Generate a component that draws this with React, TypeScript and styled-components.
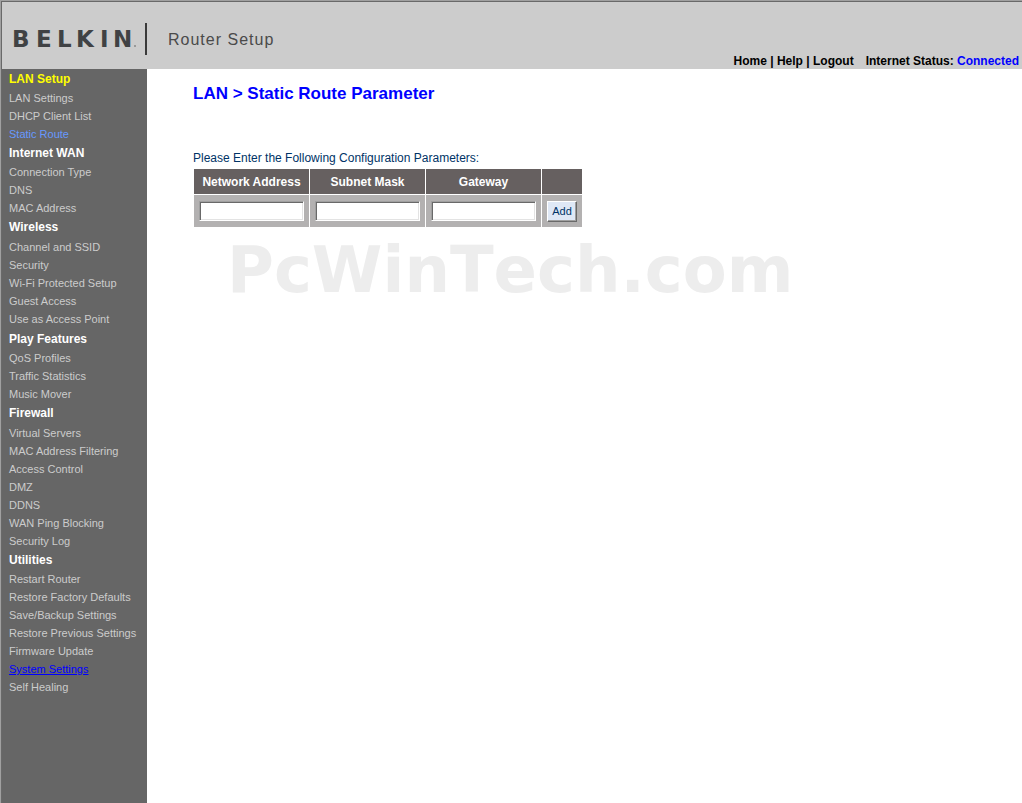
import React from "react";
import styled, { createGlobalStyle } from "styled-components";

const GlobalStyle = createGlobalStyle`
  * { box-sizing: border-box; }
  body {
    margin: 0;
    background: #fff;
    font-family: "Liberation Sans", Arial, sans-serif;
    font-size: 12px;
  }
`;

const Frame = styled.div`
  border-top: 1px solid #a0a0a0;
  border-left: 1px solid #a0a0a0;
`;

const Page = styled.div`
  display: flex;
  flex-direction: column;
  min-height: calc(100vh - 1px);
  border-top: 1px solid #696969;
  border-left: 1px solid #696969;
`;

const Header = styled.header`
  display: flex;
  justify-content: space-between;
  height: 67px;
  background: #ccc;
`;

const Brand = styled.div`
  display: flex;
  align-items: center;
  padding: 7px 0 0 10px;
`;

const Logo = styled.svg`
  display: block;
  width: 136px;
  height: 34px;
`;

const Product = styled.span`
  padding: 2px 0 0 20px;
  font-size: 16px;
  letter-spacing: 1px;
  color: #4a4a4a;
`;

const TopBar = styled.nav`
  align-self: flex-end;
  padding-right: 3px;
  font-weight: bold;
  line-height: 16px;
  white-space: pre;
  color: #000;
`;

const TopLink = styled.a`
  color: #000;
  text-decoration: none;
`;

const Status = styled.span`
  margin-left: 12px;
`;

const Connected = styled.span`
  color: #00f;
`;

const Body = styled.div`
  display: flex;
  flex: 1;
`;

const Sidebar = styled.nav`
  flex: 0 0 145px;
  padding-left: 7px;
  background: #666;
`;

const GroupTitle = styled.h2<{ $active?: boolean }>`
  margin: 0;
  font-size: 12px;
  line-height: 20px;
  color: ${(p) => (p.$active ? "#ff0" : "#fff")};
`;

const ItemList = styled.ul<{ $top?: number; $bottom?: number }>`
  margin: 0;
  padding: ${(p) => p.$top ?? 0}px 0 ${(p) => p.$bottom ?? 0}px;
  list-style: none;
  font-size: 11px;
  line-height: 18px;
  white-space: nowrap;
`;

type LinkState = "normal" | "current" | "hover";

const linkColors: Record<LinkState, string> = {
  normal: "#ccc",
  current: "#69f",
  hover: "#00f",
};

const ItemLink = styled.a<{ $state: LinkState }>`
  color: ${(p) => linkColors[p.$state]};
  text-decoration: ${(p) => (p.$state === "hover" ? "underline" : "none")};
`;

const Main = styled.main`
  flex: 1;
  padding: 15px 0 0 46px;
`;

const Title = styled.h1`
  margin: 0;
  font-size: 17px;
  line-height: 20px;
  color: #00f;
`;

const Intro = styled.p`
  margin: 44px 0 0;
  line-height: 20px;
  color: #036;
`;

const Table = styled.table`
  border-spacing: 1px;
`;

const HeadCell = styled.th`
  height: 25px;
  padding: 0;
  background: #666060;
  color: #fff;
  font-size: 12px;
`;

const Cell = styled.td`
  height: 32px;
  padding: 0 5px;
  background: #b3b1b1;
`;

const Field = styled.input`
  display: block;
  width: 105px;
  height: 20px;
  padding: 2px;
  border: 1px solid;
  border-color: #a0a0a0 #fff #fff #a0a0a0;
  border-radius: 0;
  box-shadow: inset 1px 1px 0 #696969, inset -1px -1px 0 #e3e3e3;
  background: #fff;
  font: inherit;
`;

const AddButton = styled.button`
  display: block;
  width: 30px;
  height: 21px;
  padding: 0;
  border: 1px solid;
  border-color: #fff #696969 #696969 #fff;
  border-radius: 0;
  box-shadow: inset -1px -1px 0 #a0a0a0;
  background: #dfe8f6;
  color: #036;
  font-family: inherit;
  font-size: 11px;
`;

const Watermark = styled.div`
  margin: 4px 0 0 34px;
  font-family: "DejaVu Sans", Verdana, sans-serif;
  font-size: 64px;
  font-weight: bold;
  font-kerning: none;
  line-height: 76px;
  color: #ededed;
`;

interface Group {
  title: string;
  items: string[];
  active?: boolean;
  top?: number;
  bottom?: number;
}

const groups: Group[] = [
  { title: "LAN Setup", active: true, items: ["LAN Settings", "DHCP Client List", "Static Route"] },
  { title: "Internet WAN", items: ["Connection Type", "DNS", "MAC Address"] },
  {
    title: "Wireless",
    top: 1,
    bottom: 1,
    items: ["Channel and SSID", "Security", "Wi-Fi Protected Setup", "Guest Access", "Use as Access Point"],
  },
  { title: "Play Features", items: ["QoS Profiles", "Traffic Statistics", "Music Mover"] },
  {
    title: "Firewall",
    top: 1,
    items: [
      "Virtual Servers",
      "MAC Address Filtering",
      "Access Control",
      "DMZ",
      "DDNS",
      "WAN Ping Blocking",
      "Security Log",
    ],
  },
  {
    title: "Utilities",
    items: [
      "Restart Router",
      "Restore Factory Defaults",
      "Save/Backup Settings",
      "Restore Previous Settings",
      "Firmware Update",
      "System Settings",
      "Self Healing",
    ],
  },
];

const columns = ["Network Address", "Subnet Mask", "Gateway"];

const stateOf = (item: string): LinkState =>
  item === "Static Route" ? "current" : item === "System Settings" ? "hover" : "normal";

export default function App() {
  return (
    <Frame>
      <GlobalStyle />
      <Page>
        <Header>
          <Brand>
            <Logo viewBox="0 0 136 34" role="img" aria-label="Belkin">
              <text
                x="0 24 45 64 88 101"
                y="25"
                fontFamily="'DejaVu Sans', sans-serif"
                fontSize="23"
                fontWeight="700"
                fill="#404244"
              >
                BELKIN
              </text>
              <rect x="122" y="23" width="2" height="2" fill="#999" />
              <rect x="133" y="1" width="2" height="32" fill="#3a3a3a" />
            </Logo>
            <Product>Router Setup</Product>
          </Brand>
          <TopBar>
            <TopLink href="#">Home</TopLink> | <TopLink href="#">Help</TopLink> |{" "}
            <TopLink href="#">Logout</TopLink>
            <Status>
              Internet Status: <Connected>Connected</Connected>
            </Status>
          </TopBar>
        </Header>
        <Body>
          <Sidebar>
            {groups.map((group) => (
              <section key={group.title}>
                <GroupTitle $active={group.active}>{group.title}</GroupTitle>
                <ItemList $top={group.top} $bottom={group.bottom}>
                  {group.items.map((item) => (
                    <li key={item}>
                      <ItemLink href="#" $state={stateOf(item)}>
                        {item}
                      </ItemLink>
                    </li>
                  ))}
                </ItemList>
              </section>
            ))}
          </Sidebar>
          <Main>
            <Title>LAN &gt; Static Route Parameter</Title>
            <Intro>Please Enter the Following Configuration Parameters:</Intro>
            <Table>
              <thead>
                <tr>
                  {columns.map((column) => (
                    <HeadCell key={column} scope="col">
                      {column}
                    </HeadCell>
                  ))}
                  <HeadCell />
                </tr>
              </thead>
              <tbody>
                <tr>
                  {columns.map((column) => (
                    <Cell key={column}>
                      <Field type="text" aria-label={column} />
                    </Cell>
                  ))}
                  <Cell>
                    <AddButton type="button">Add</AddButton>
                  </Cell>
                </tr>
              </tbody>
            </Table>
            <Watermark>PcWinTech.com</Watermark>
          </Main>
        </Body>
      </Page>
    </Frame>
  );
}
